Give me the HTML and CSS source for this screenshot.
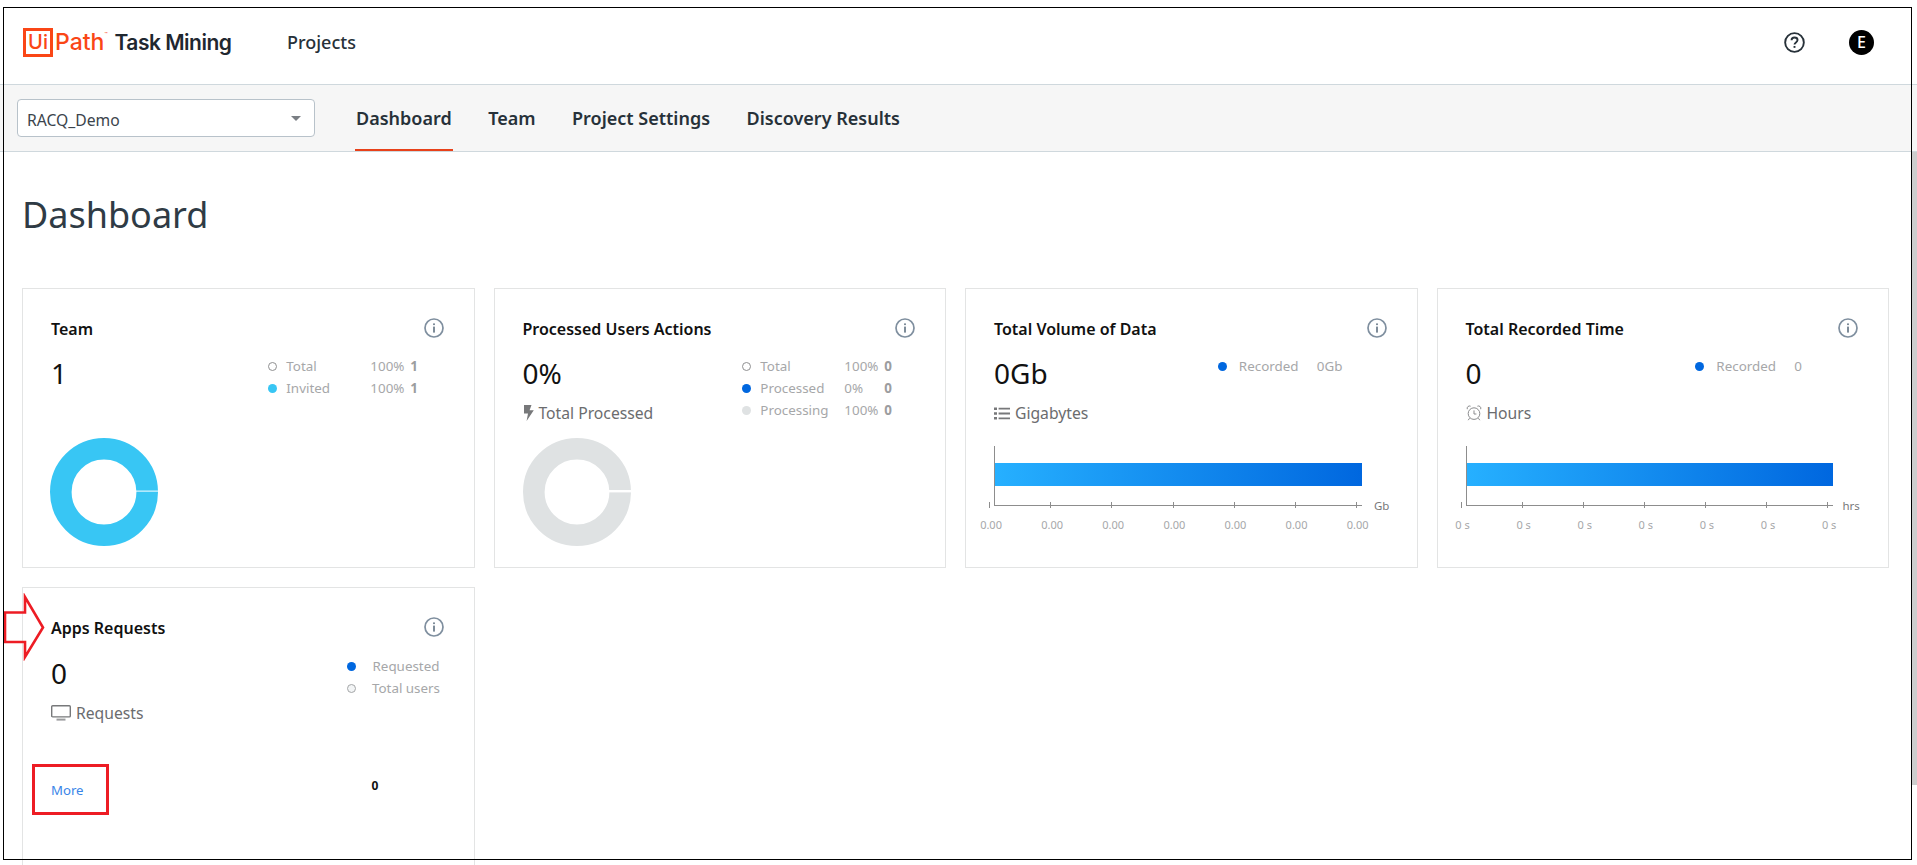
FILE: index.html
```html
<!DOCTYPE html>
<html lang="en">
<head>
<meta charset="utf-8">
<title>Task Mining - Dashboard</title>
<link rel="stylesheet" href="styles.css">
</head>
<body>
<svg class="sprite" width="0" height="0" aria-hidden="true">
  <symbol id="info" viewBox="0 0 20 20">
    <circle cx="10" cy="10" r="9" fill="none" stroke="#7f8f9f" stroke-width="1.7"/>
    <rect x="9.2" y="8.6" width="1.6" height="6" fill="#5f7080"/>
    <rect x="9.2" y="5.4" width="1.6" height="1.7" fill="#5f7080"/>
  </symbol>
</svg>
<div class="page">
  <header class="topbar">
    <div class="logo">
      <span class="logo-box">Ui</span><span class="logo-path">Path</span><span class="logo-tm">™</span>
      <span class="logo-product">Task Mining</span>
    </div>
    <a class="projects">Projects</a>
    <div class="top-actions">
      <svg class="help" viewBox="0 0 20 20" width="21" height="21">
        <circle cx="10" cy="10" r="8.9" fill="none" stroke="#273139" stroke-width="1.8"/>
        <path d="M7.2 7.9c0-1.6 1.2-2.6 2.8-2.6s2.9 1 2.9 2.4c0 2.2-2.9 2.2-2.9 4.2" fill="none" stroke="#273139" stroke-width="1.8"/>
        <rect x="9.1" y="13.3" width="1.8" height="1.8" fill="#273139"/>
      </svg>
      <span class="avatar">E</span>
    </div>
  </header>
  <nav class="subnav">
    <div class="select"><span>RACQ_Demo</span><i class="caret"></i></div>
    <ul class="tabs">
      <li class="tab active">Dashboard</li>
      <li class="tab">Team</li>
      <li class="tab">Project Settings</li>
      <li class="tab">Discovery Results</li>
    </ul>
  </nav>
  <main class="content">
    <h1 class="title">Dashboard</h1>
    <div class="cards">

      <section class="card">
        <div class="card-head"><h2>Team</h2><svg class="info"><use href="#info"/></svg></div>
        <div class="card-body">
          <div class="stat">
            <div class="value">1</div>
          </div>
          <div class="legend team-legend">
            <div class="row"><i class="dot ring"></i><span class="name">Total</span><span class="pct">100%</span><b>1</b></div>
            <div class="row"><i class="dot cyan"></i><span class="name">Invited</span><span class="pct">100%</span><b>1</b></div>
          </div>
        </div>
        <svg class="donut team-donut" viewBox="0 0 108 108" width="108" height="108">
          <circle cx="54" cy="54" r="43.2" fill="none" stroke="#38c6f4" stroke-width="21.6"/>
          <rect x="86" y="52.6" width="22" height="1" fill="#fff"/>
        </svg>
      </section>

      <section class="card">
        <div class="card-head"><h2>Processed Users Actions</h2><svg class="info"><use href="#info"/></svg></div>
        <div class="card-body">
          <div class="stat">
            <div class="value">0%</div>
            <div class="unit">
              <svg class="unit-icon" viewBox="0 0 11 16" width="11" height="16"><path d="M1 0h7.5L6.6 5.2 10.8 5.2 3.6 16 5 8.4 1 8.4z" fill="#77787a"/></svg>
              Total Processed
            </div>
          </div>
          <div class="legend proc-legend">
            <div class="row"><i class="dot ring"></i><span class="name">Total</span><span class="pct">100%</span><b>0</b></div>
            <div class="row"><i class="dot blue"></i><span class="name">Processed</span><span class="pct">0%</span><b>0</b></div>
            <div class="row"><i class="dot grey"></i><span class="name">Processing</span><span class="pct">100%</span><b>0</b></div>
          </div>
        </div>
        <svg class="donut proc-donut" viewBox="0 0 108 108" width="108" height="108">
          <circle cx="54" cy="54" r="43.2" fill="none" stroke="#dfe2e3" stroke-width="21.6"/>
          <rect x="86" y="52" width="22" height="2.4" fill="#fff"/>
        </svg>
      </section>

      <section class="card">
        <div class="card-head"><h2>Total Volume of Data</h2><svg class="info"><use href="#info"/></svg></div>
        <div class="card-body">
          <div class="stat">
            <div class="value">0Gb</div>
            <div class="unit">
              <svg class="unit-icon" viewBox="0 0 16 13" width="16" height="13">
                <path d="M0 0.5h3v2.4H0zM0 5.3h3v2.4H0zM0 10.1h3v2.4H0zM4.6 0.8H16v1.8H4.6zM4.6 5.6H16v1.8H4.6zM4.6 10.4H16v1.8H4.6z" fill="#77787a"/>
              </svg>
              Gigabytes
            </div>
          </div>
          <div class="legend rec-legend">
            <div class="row"><i class="dot blue"></i><span class="name">Recorded</span><span class="pct">0Gb</span></div>
          </div>
        </div>
        <div class="chart">
          <div class="plot">
            <div class="bar"></div>
            <svg class="ticks" viewBox="0 0 374 6" preserveAspectRatio="none"><path d="M.5 0v6M61.5 0v6M122.5 0v6M184.5 0v6M245.5 0v6M306.5 0v6M367.5 0v6" stroke="#8d8d8d" fill="none"/></svg>
            <span class="axis-unit">Gb</span>
          </div>
          <div class="tick-labels"><span>0.00</span><span>0.00</span><span>0.00</span><span>0.00</span><span>0.00</span><span>0.00</span><span>0.00</span></div>
        </div>
      </section>

      <section class="card">
        <div class="card-head"><h2>Total Recorded Time</h2><svg class="info"><use href="#info"/></svg></div>
        <div class="card-body">
          <div class="stat">
            <div class="value">0</div>
            <div class="unit">
              <svg class="unit-icon" viewBox="0 0 16 16" width="16" height="16">
                <circle cx="8" cy="8.6" r="5.8" fill="none" stroke="#8a8b8d" stroke-width="1"/>
                <path d="M8 5.4v3.6h2.4M1.3 4.2a2.4 2.4 0 0 1 3.3-3M14.7 4.2a2.4 2.4 0 0 0-3.3-3M3.6 13.2 2.2 15.2M12.4 13.2l1.4 2" fill="none" stroke="#8a8b8d" stroke-width="1"/>
              </svg>
              Hours
            </div>
          </div>
          <div class="legend rec-legend time-legend">
            <div class="row"><i class="dot blue"></i><span class="name">Recorded</span><span class="pct">0</span></div>
          </div>
        </div>
        <div class="chart">
          <div class="plot plot-time">
            <div class="bar"></div>
            <svg class="ticks" viewBox="0 0 374 6" preserveAspectRatio="none"><path d="M.5 0v6M61.5 0v6M122.5 0v6M183.5 0v6M244.5 0v6M305.5 0v6M366.5 0v6" stroke="#8d8d8d" fill="none"/></svg>
            <span class="axis-unit">hrs</span>
          </div>
          <div class="tick-labels"><span>0 s</span><span>0 s</span><span>0 s</span><span>0 s</span><span>0 s</span><span>0 s</span><span>0 s</span></div>
        </div>
      </section>

      <section class="card card-tall">
        <div class="card-head"><h2>Apps Requests</h2><svg class="info"><use href="#info"/></svg></div>
        <div class="card-body">
          <div class="stat">
            <div class="value">0</div>
            <div class="unit">
              <svg class="unit-icon" viewBox="0 0 20 16" width="20" height="16">
                <rect x="0.7" y="0.7" width="18.6" height="11.2" rx="1" fill="none" stroke="#77787a" stroke-width="1.4"/>
                <path d="M5.5 14.6h9" stroke="#9b9c9e" stroke-width="2"/>
              </svg>
              Requests
            </div>
          </div>
          <div class="legend app-legend">
            <div class="row"><i class="dot blue"></i><span class="name">Requested</span></div>
            <div class="row"><i class="dot ring"></i><span class="name">Total users</span></div>
          </div>
        </div>
        <div class="app-foot">
          <a class="more">More</a>
          <b class="app-count">0</b>
        </div>
      </section>
    </div>
  </main>
</div>

<div class="scroll-track"></div>
<div class="frame"></div>
<svg class="mark-arrow" viewBox="0 0 42 68" width="42" height="68">
  <path d="M1 19.5H21V4L39 34.5 21 64V49H1Z" fill="none" stroke="#ed1c24" stroke-width="2.6"/>
</svg>
<div class="mark-box"></div>
</body>
</html>
```
FILE: styles.css
```css
* { box-sizing: border-box; }
html, body { margin: 0; height: 100%; }
body {
  width: 1917px;
  height: 865px;
  overflow: hidden;
  position: relative;
  background: #fff;
  font-family: "Noto Sans", "Open Sans", sans-serif;
  color: #273139;
}
.sprite { position: absolute; }

.topbar {
  height: 85px;
  padding: 0 0 0 23px;
  display: flex;
  align-items: center;
  border-bottom: 1px solid #cfd8dd;
}
.logo {
  width: 264px;
  display: flex;
  align-items: center;
  font-family: Inter, "Noto Sans", sans-serif;
  font-weight: 500;
  position: relative;
}
.logo-box {
  width: 30px;
  height: 29px;
  border: 3px solid #fa4616;
  color: #fa4616;
  font-size: 20px;
  line-height: 23px;
  text-align: center;
}
.logo-path {
  margin-left: 2px;
  color: #fa4616;
  font-size: 23px;
}
.logo-tm {
  color: #fa4616;
  font-size: 5px;
  align-self: flex-start;
  margin-top: 3px;
}
.logo-product {
  margin-left: 7px;
  font-size: 21px;
  font-weight: 600;
  letter-spacing: -0.5px;
  color: #1f2730;
}
.projects {
  font-size: 18px;
  font-weight: 500;
  color: #273139;
}
.top-actions {
  margin-left: auto;
  padding-right: 43px;
  display: flex;
  align-items: center;
  gap: 44px;
}
.help { display: block; }
.avatar {
  width: 25px;
  height: 25px;
  border-radius: 50%;
  background: #000;
  color: #fff;
  font-size: 16px;
  font-weight: 500;
  line-height: 25px;
  text-align: center;
}

.subnav {
  height: 67px;
  padding: 0 0 0 17px;
  display: flex;
  align-items: stretch;
  background: #f6f6f6;
  border-bottom: 1px solid #cfd8dd;
}
.select {
  width: 298px;
  height: 38px;
  margin-top: 14px;
  padding: 0 13px 0 9px;
  display: flex;
  align-items: center;
  justify-content: space-between;
  background: #fff;
  border: 1px solid #b8c2ca;
  border-radius: 4px;
  font-size: 15.7px;
  color: #3b444c;
}
.select span { margin-top: 3px; }
.caret {
  width: 0;
  height: 0;
  border-left: 5px solid transparent;
  border-right: 5px solid transparent;
  border-top: 5px solid #7a7f84;
}
.tabs {
  list-style: none;
  margin: 0 0 0 40px;
  padding: 0;
  display: flex;
  gap: 34.5px;
}
.tab {
  font-size: 18px;
  font-weight: 600;
  line-height: 67px;
  height: 66px;
  padding: 0 1px;
  color: #273139;
}
.tab.active { border-bottom: 2px solid #e8411a; }

.content { padding: 0 28px 0 22px; }
.title {
  margin: 0;
  padding-top: 38px;
  height: 136px;
  font-size: 36px;
  line-height: 50px;
  font-weight: 400;
  color: #2f3b45;
}
.cards {
  display: grid;
  grid-template-columns: repeat(4, minmax(0, 1fr));
  gap: 19px;
}
.card {
  height: 280px;
  padding: 28px 28px 0 28px;
  border: 1px solid #e3e4e4;
  background: #fff;
  position: relative;
  display: flow-root;
}
.card-tall { height: 340px; }
.card-head {
  display: flex;
  justify-content: space-between;
  align-items: flex-start;
  height: 44px;
}
.card-head h2 {
  margin: 0;
  font-size: 16px;
  line-height: 24px;
  font-weight: 600;
  color: #111;
}
.info { width: 20px; height: 20px; margin-top: 1px; margin-right: 2px; }
.card-body {
  display: flex;
  justify-content: space-between;
  height: 89px;
}
.value {
  margin-top: -6px;
  font-size: 28px;
  line-height: 36px;
  color: #111;
}
.unit {
  margin-top: 10px;
  display: flex;
  align-items: center;
  gap: 5px;
  font-size: 15.7px;
  line-height: 24px;
  color: #6b6c6e;
}
.unit-icon { display: block; }
.legend { font-size: 13.4px; color: #a6a7a9; }
.row {
  display: flex;
  align-items: center;
  height: 22px;
}
.row b { color: #9c9d9f; font-weight: 700; }
.dot {
  width: 9px;
  height: 9px;
  border-radius: 50%;
  margin-right: 9px;
  flex: none;
}
.ring { background: #fff; border: 1px solid #8f9091; }
.cyan { background: #38c6f4; }
.blue { background: #0067df; }
.grey { background: #dfe2e3; }

.team-legend { margin-right: 27.5px; margin-top: -6px; }
.team-legend .name { width: 84px; }
.team-legend .pct { width: 40px; }
.proc-legend { margin-right: 25px; margin-top: -6px; }
.proc-legend .name { width: 84px; }
.proc-legend .pct { width: 40px; }
.rec-legend { margin-right: 46px; margin-top: -6px; }
.rec-legend .dot { margin-right: 12px; }
.rec-legend .name { width: 78px; }
.time-legend { margin-right: 58px; }
.app-legend { margin-right: 5px; margin-top: -6px; }
.app-legend .dot { margin-right: 16px; }
.app-legend .name { width: 69px; text-align: center; }
.app-legend .ring { background: #f3f5f6; border-color: #a4a6a8; }
.card-tall .card-body { margin-top: 1px; }

.donut { display: block; margin-top: -12px; }
.team-donut { margin-left: -1px; }

.plot {
  position: relative;
  height: 60px;
  border-left: 1px solid #8d8d8d;
  border-bottom: 1px solid #8d8d8d;
  width: 368px;
  margin-top: -4px;
}
.plot-time { width: 367px; }
.bar {
  position: absolute;
  left: 0;
  right: 0;
  top: 17px;
  height: 23px;
  background: linear-gradient(90deg, #26b0ff 0%, #0067df 100%);
}
.ticks {
  position: absolute;
  left: -6px;
  bottom: -3px;
  width: 374px;
  height: 6px;
}
.axis-unit {
  position: absolute;
  left: 379px;
  bottom: -8px;
  font-size: 11.5px;
  color: #77787a;
}
.plot-time .axis-unit { left: 376px; }
.tick-labels {
  width: 434px;
  margin-left: -33.5px;
  margin-top: 11px;
  display: grid;
  grid-template-columns: repeat(7, 61.1px);
  font-size: 11px;
  line-height: 16px;
  color: #a6a7a9;
  text-align: center;
}

.app-foot {
  display: flex;
  align-items: flex-start;
  height: 40px;
}
.more {
  font-size: 13.2px;
  line-height: 22px;
  margin-top: 29px;
  color: #3a85e8;
}
.app-count {
  margin-left: 288px;
  margin-top: 28px;
  font-size: 12px;
  line-height: 16px;
  color: #111;
}

.frame {
  position: absolute;
  left: 3px;
  top: 7px;
  width: 1909px;
  height: 853px;
  border: 1px solid #000;
  pointer-events: none;
}
.scroll-track {
  position: absolute;
  left: 1912px;
  top: 152px;
  width: 5px;
  height: 633px;
  background: #cdcdcd;
}
.mark-arrow {
  position: absolute;
  left: 4px;
  top: 593px;
}
.mark-box {
  position: absolute;
  left: 32px;
  top: 764px;
  width: 77px;
  height: 51px;
  border: 3px solid #ed1c24;
}
```
